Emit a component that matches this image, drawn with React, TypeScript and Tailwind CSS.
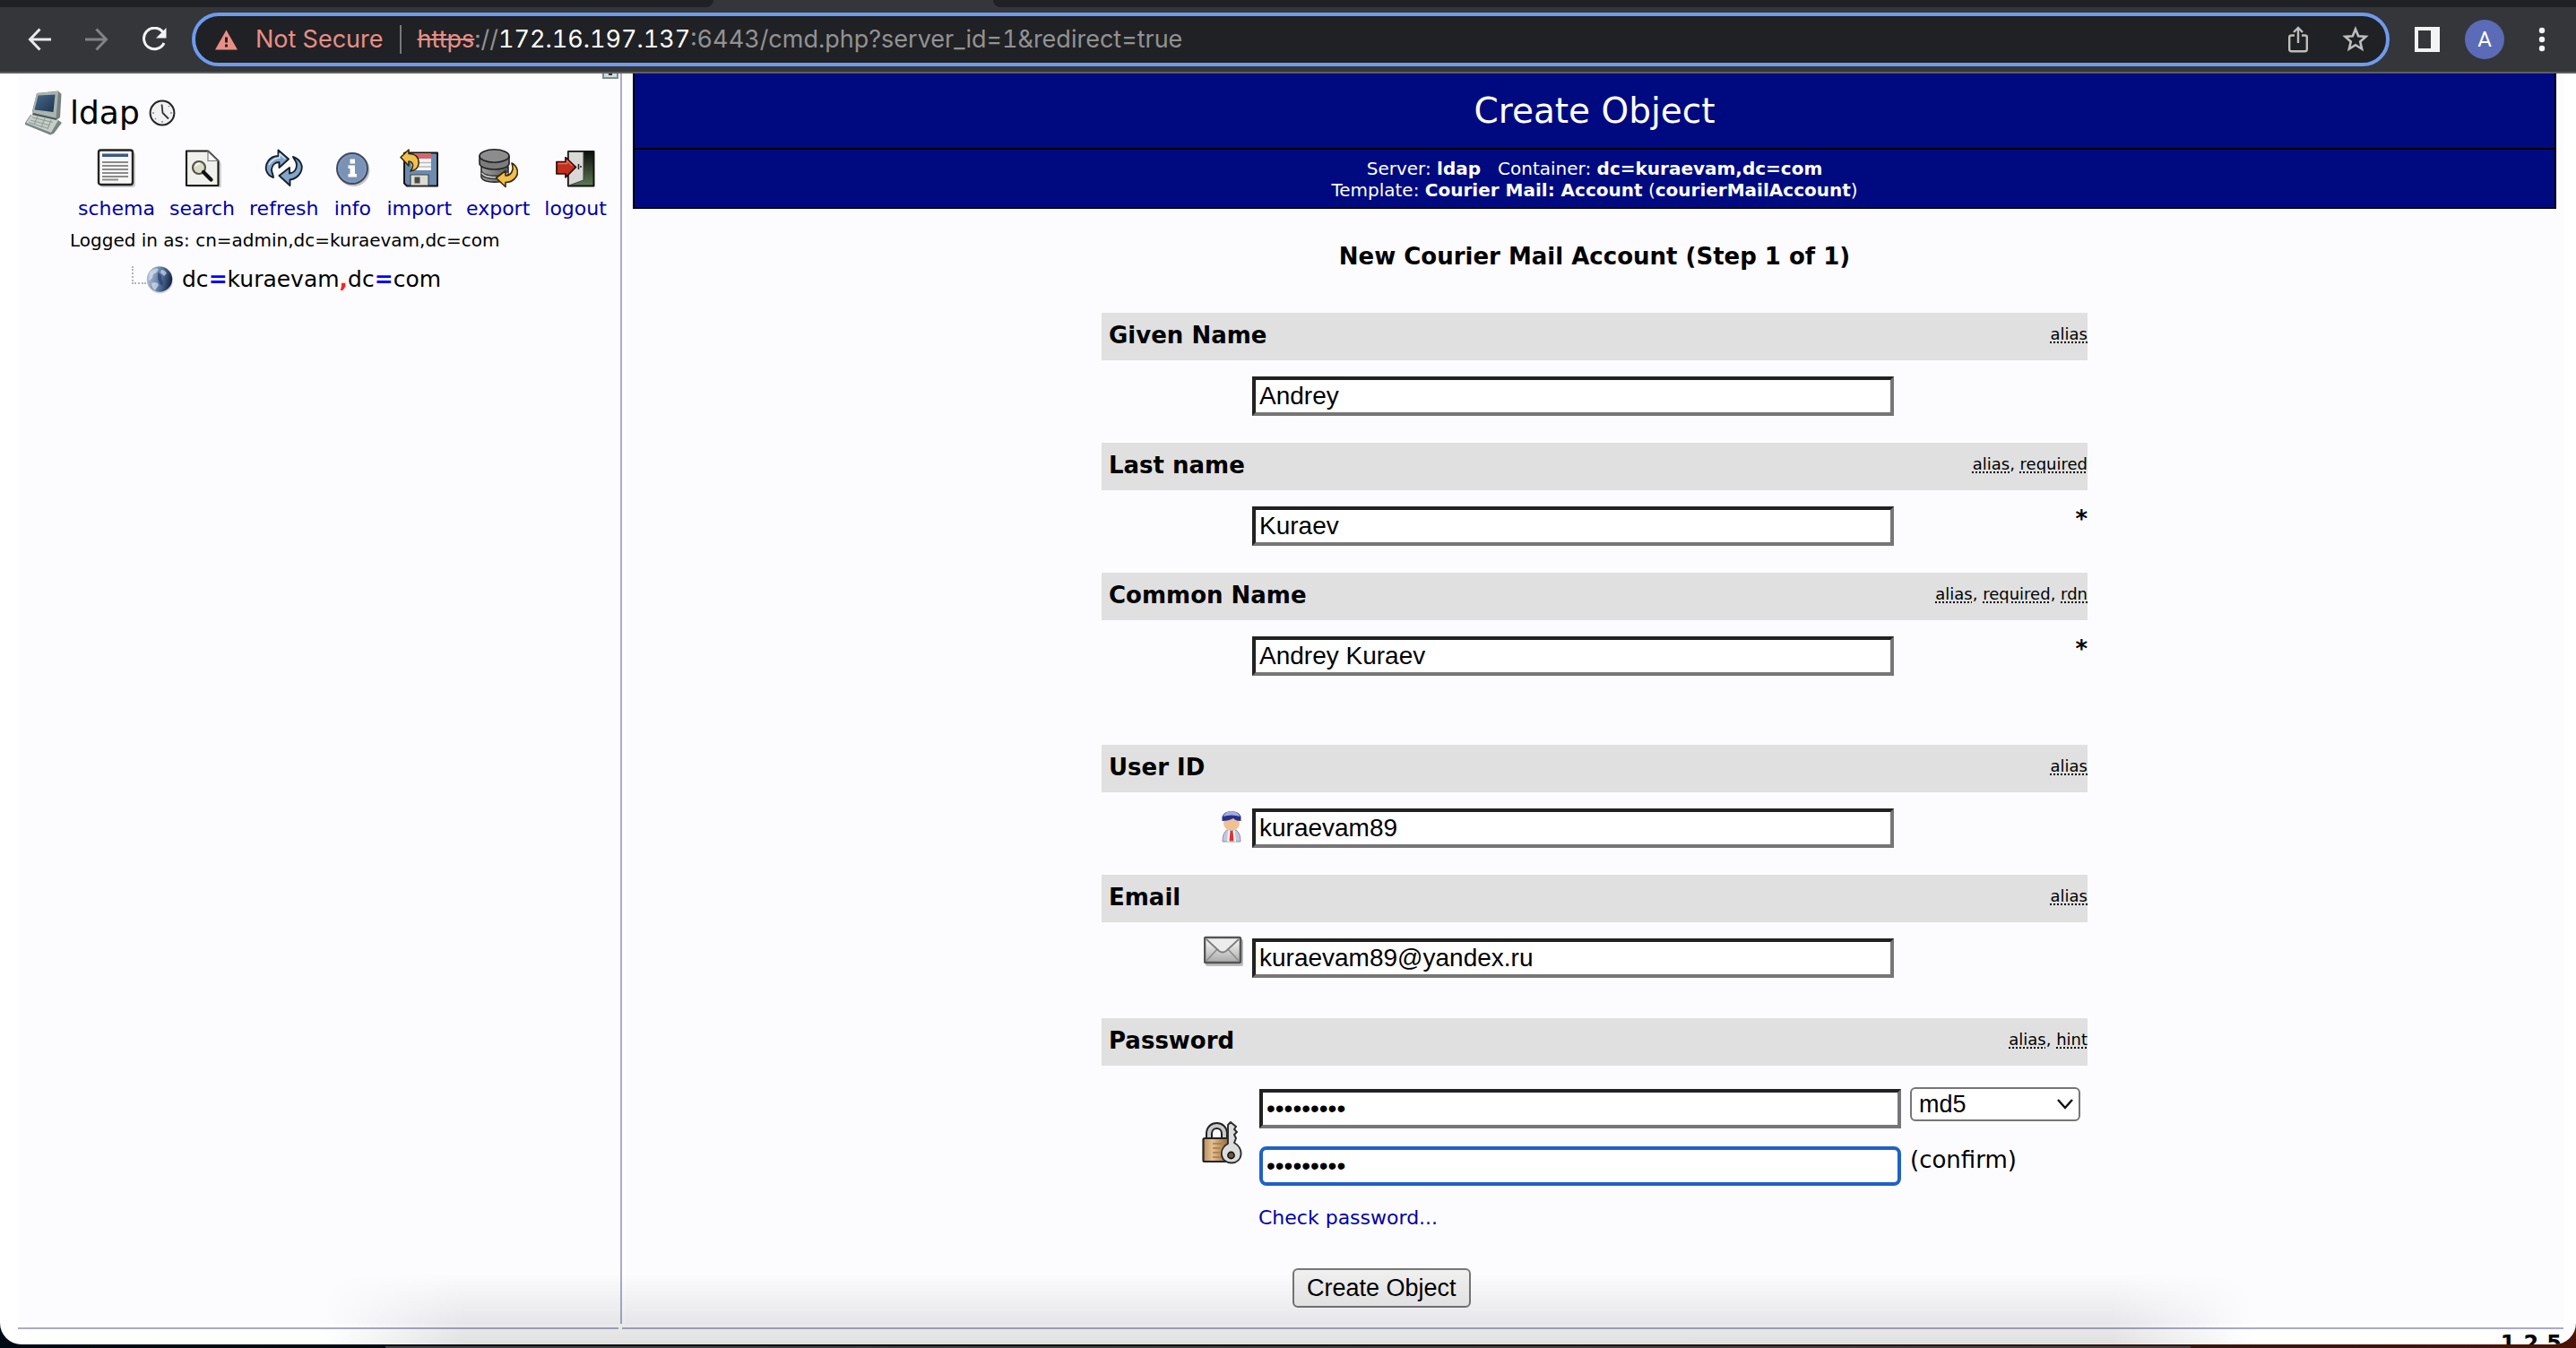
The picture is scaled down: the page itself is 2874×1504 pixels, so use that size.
import React from "react";

const verdana = "font-['DejaVu_Sans',Verdana,sans-serif]";
const arial = "font-['Liberation_Sans',Arial,sans-serif]";
const insetInput =
  "h-11 w-full border-4 border-t-[#212121] border-l-[#212121] border-r-[#767676] border-b-[#767676] bg-white px-1 text-[28px] leading-8 text-black outline-none font-['Liberation_Sans',Arial,sans-serif]";
const focusedInput =
  "h-11 w-full rounded-lg border-4 border-[#2060c8] bg-white px-1 text-[28px] leading-8 text-black outline-none font-['Liberation_Sans',Arial,sans-serif]";

/* ---------- Browser toolbar icons ---------- */

function BackIcon() {
  return (
    <svg width="26" height="26" viewBox="0 0 26 26" fill="none" stroke="#e8eaed" strokeWidth="3">
      <path d="M26 13H3M13.500 1.500L2.500 13L13.500 24.500" />
    </svg>
  );
}

function ForwardIcon() {
  return (
    <svg width="26" height="26" viewBox="0 0 26 26" fill="none" stroke="#818386" strokeWidth="3">
      <path d="M0 13H23M12.500 1.500L23.500 13L12.500 24.500" />
    </svg>
  );
}

function ReloadIcon() {
  return (
    <svg width="28" height="28" viewBox="0 0 28 28">
      <path d="M23.500 5.500A11.800 11.800 0 1 0 25 18" fill="none" stroke="#f1f3f4" strokeWidth="3" />
      <path d="M27.500 1V12.500H16z" fill="#f1f3f4" />
    </svg>
  );
}

function WarningIcon() {
  return (
    <svg width="25" height="23" viewBox="0 0 25 23">
      <path d="M12.500 0.500L25 22.500H0z" fill="#e88f86" />
      <path d="M11 8.500h3v6h-3zM11 16.500h3v3h-3z" fill="#202124" />
    </svg>
  );
}

function ShareIcon() {
  return (
    <svg width="22" height="30" viewBox="0 0 22 30" fill="none" stroke="#bdbdbd" strokeWidth="2.400">
      <path d="M7 10.500H3.500Q1.200 10.500 1.200 12.500V26Q1.200 28.200 3.500 28.200H18.500Q20.800 28.200 20.800 26V12.500Q20.800 10.500 18.500 10.500H15" />
      <path d="M11 19V2.500M6 7L11 2L16 7" />
    </svg>
  );
}

function StarIcon() {
  return (
    <svg width="30" height="30" viewBox="0 0 30 30" fill="none" stroke="#bdbdbd" strokeWidth="2.600">
      <path d="M15 3.500L18.200 11.200L26.500 11.900L20.200 17.400L22.100 25.500L15 21.200L7.900 25.500L9.800 17.400L3.500 11.900L11.800 11.200Z" />
    </svg>
  );
}

function SidePanelIcon() {
  return (
    <svg width="28" height="28" viewBox="0 0 28 28">
      <path d="M0 0H28V28H0zM4 4V24H18V4z" fill="#f1f3f4" fillRule="evenodd" />
    </svg>
  );
}

function DotsIcon() {
  return (
    <svg width="8" height="28" viewBox="0 0 8 28" fill="#f1f3f4">
      <circle cx="4" cy="4" r="3.200" />
      <circle cx="4" cy="14" r="3.200" />
      <circle cx="4" cy="24" r="3.200" />
    </svg>
  );
}

/* ---------- Sidebar icons ---------- */

function ComputerIcon() {
  return (
    <svg width="42" height="50" viewBox="0 0 42 50">
      <defs>
        <linearGradient id="screen" x1="0" y1="0" x2="1" y2="1">
          <stop offset="0" stopColor="#4a6a8a" />
          <stop offset="1" stopColor="#1c3450" />
        </linearGradient>
      </defs>
      <path d="M13 3L37 0.500L40.500 4L39 30L35 33L9 27L8 23z" fill="#77827f" />
      <path d="M13 3L37 1L34.500 31L8 25z" fill="#aab4b0" />
      <path d="M14.500 5.500L33.500 4.500L31.500 24L10.500 21.500z" fill="url(#screen)" />
      <path d="M6 27L37 33L41 36L32 48L28 49.500L0 38V36z" fill="#7a8582" />
      <path d="M7 27L37 33L29 47L1 36z" fill="#c6cec9" />
      <path d="M8 30L31 35.500M6 33L28 39M4 35.500L26 42.500M14 29L10 38M22 31L18 41M29 33L25 43" stroke="#929d98" strokeWidth="1.200" />
      <path d="M9 25L35 31V33L8 27z" fill="#4d5755" />
    </svg>
  );
}

function ClockIcon() {
  return (
    <svg width="30" height="30" viewBox="0 0 30 30">
      <circle cx="15" cy="15" r="13.400" fill="#f1f1f1" stroke="#222" strokeWidth="2" />
      <path d="M14.500 5.500L15.500 15L22 21.500" fill="none" stroke="#333" strokeWidth="1.800" />
      <path d="M15 24v2M4 15h2M24 15h2M7 22l1-1M23 7l-1 1" stroke="#888" strokeWidth="1.500" />
    </svg>
  );
}

function SchemaIcon() {
  return (
    <svg width="44" height="44" viewBox="0 0 44 44">
      <rect x="4" y="4" width="39" height="39" rx="3" fill="#00000030" />
      <rect x="2" y="1.500" width="38" height="38.500" rx="2.500" fill="#f7f7f7" stroke="#222" strokeWidth="2.400" />
      <path d="M6 5.500h29v3.500H6z" fill="#3b5988" />
      <path d="M6 15h29M6 19h29M6 23h29M6 27h29M6 31h29M6 34.500h18" stroke="#8b8b8b" strokeWidth="1.900" />
    </svg>
  );
}

function SearchIcon() {
  return (
    <svg width="44" height="44" viewBox="0 0 44 44">
      <path d="M6 5h26l11 11v27H6z" fill="#00000028" />
      <path d="M4 2.500H28L39.500 13.500V41H4z" fill="#f0f0ec" stroke="#1c1c1c" strokeWidth="2.200" strokeLinejoin="round" />
      <path d="M28 3V13.500H39z" fill="#fff" stroke="#777" strokeWidth="1.200" />
      <circle cx="18" cy="21" r="7" fill="#d9dcc6" stroke="#555549" strokeWidth="2.200" />
      <path d="M23 26L31.500 34.500" stroke="#111" strokeWidth="4.200" strokeLinecap="round" />
      <path d="M14 19q2-3 5-2.500" fill="none" stroke="#fff" strokeWidth="1.500" />
    </svg>
  );
}

function RefreshIcon() {
  return (
    <svg width="44" height="44" viewBox="0 0 44 44" strokeLinejoin="round">
      <g fill="#84a5c9" stroke="#15202c" strokeWidth="1.900">
        <path d="M10 32C1 29 0 20 4 14C7 9.500 11 8 15.500 8V1.500L27 11.500L16.500 21V15C12 15 8.500 18 8 23C8 27 10 29 10 32z" />
        <path d="M32 9C41 12 44 20 40 27C37 32 33 34 28.500 34.500V41L16.500 30L28 21V27.500C33 27 36 23 36 18C36 13 33 12 32 9z" />
      </g>
      <path d="M5 18Q9 10.500 17 10V5.500L23 11" fill="none" stroke="#d3e3f2" strokeWidth="1.500" />
    </svg>
  );
}

function InfoIcon() {
  return (
    <svg width="44" height="44" viewBox="0 0 44 44">
      <circle cx="23.500" cy="24" r="18" fill="#00000038" />
      <circle cx="22" cy="22" r="17" fill="#7a92b6" stroke="#3d4a60" strokeWidth="2" />
      <circle cx="22" cy="22" r="15" fill="none" stroke="#8499bc" strokeWidth="1.500" />
      <path d="M19.500 11.500h5.500v5h-5.500zM17.500 18.500H25V28h2v3.500H17.500V28h2v-6h-2z" fill="#fff" />
    </svg>
  );
}

function ImportIcon() {
  return (
    <svg width="44" height="44" viewBox="0 0 44 44" strokeLinejoin="round">
      <path d="M6 4.500H42V41.500H8L5 38.500V5z" fill="#6b8bb0" stroke="#151515" strokeWidth="2" />
      <path d="M13 5.500H35V24H13z" fill="#f6f6f6" />
      <path d="M13 5.500H35V11H13z" fill="#d2686a" />
      <path d="M13 15.500H35M13 20H35" stroke="#b9b9b9" strokeWidth="1.300" />
      <path d="M12 29H32V41H12z" fill="#dcdcd6" stroke="#444" strokeWidth="1.200" />
      <path d="M16.500 31.500H22.500V38.500H16.500z" fill="#4a4a46" />
      <path d="M1 9.500L10 1V5.500C18 5.500 22 10 21 17C20.500 21.500 17.500 24 12 25C15.500 21 16 14.500 10 14V19z" fill="#efc152" stroke="#382a08" strokeWidth="1.600" />
    </svg>
  );
}

function ExportIcon() {
  return (
    <svg width="44" height="44" viewBox="0 0 44 44" strokeLinejoin="round">
      <defs>
        <linearGradient id="disk" x1="0" y1="0" x2="1" y2="0">
          <stop offset="0" stopColor="#a2a2a2" />
          <stop offset="1" stopColor="#5b5b5b" />
        </linearGradient>
      </defs>
      <path d="M3 20V32C6 39 30 39 33 32V20z" fill="url(#disk)" stroke="#222" strokeWidth="1.500" />
      <path d="M3 25C8 32 28 32 33 25M3 29C8 35 28 35 33 29" fill="none" stroke="#3a3a3a" strokeWidth="1.300" />
      <path d="M3.500 27C9 33.500 27 33.500 32.500 27" fill="none" stroke="#cfcfcf" strokeWidth="1.200" />
      <path d="M1 8V17C4 25 31 25 34 17V8z" fill="#7c7c7c" stroke="#222" strokeWidth="1.600" />
      <ellipse cx="17.500" cy="8" rx="16.500" ry="7.200" fill="#8c8c8c" stroke="#222" strokeWidth="1.600" />
      <path d="M37 16C43 19 45 26 42 31C39.500 35 35 37.500 30 37.500V42.500L19.500 32.500L30 24.500V30C34 30 37 27 38 23C38.300 20 37.500 18 37 16z" fill="#f0bf4c" stroke="#382a08" strokeWidth="1.600" />
    </svg>
  );
}

function LogoutIcon() {
  return (
    <svg width="44" height="44" viewBox="0 0 44 44" strokeLinejoin="round">
      <defs>
        <linearGradient id="doorway" x1="0" y1="0" x2="0" y2="1">
          <stop offset="0" stopColor="#0c0f0b" />
          <stop offset="1" stopColor="#5d7a55" />
        </linearGradient>
      </defs>
      <path d="M14 3H42.500V41.500H14z" fill="url(#doorway)" stroke="#111" strokeWidth="2" />
      <path d="M14.500 3.500H31V35L14.500 41z" fill="#d8d8d4" stroke="#444" strokeWidth="1" />
      <path d="M25.500 17v6M28 19v2" stroke="#222" strokeWidth="1.500" />
      <path d="M1 14.500H11V9.500L22.500 20.500L11 32V28H1z" fill="#c1301d" stroke="#2c0a05" strokeWidth="1.700" />
      <path d="M2.500 16.500H12.500V13L18.500 19" fill="none" stroke="#e2705c" strokeWidth="1.400" />
    </svg>
  );
}

function GlobeIcon() {
  return (
    <svg width="30" height="32" viewBox="0 0 30 32">
      <defs>
        <linearGradient id="globe" x1="0" y1="0.400" x2="1" y2="0.600">
          <stop offset="0" stopColor="#b4c2d4" />
          <stop offset="0.500" stopColor="#5f7da6" />
          <stop offset="1" stopColor="#101f40" />
        </linearGradient>
      </defs>
      <circle cx="15.500" cy="17" r="14.500" fill="#00000025" />
      <circle cx="15" cy="15.500" r="14.200" fill="url(#globe)" />
      <path d="M4 8Q10 2 14 4Q12 9 8 10Q7 16 3 17zM17 5Q21 5 23 9L20 12L16 8zM6 20Q12 17 14 22L10 28Q6 25 6 20z" fill="#e8f0f8" opacity="0.600" />
      <path d="M13 8Q18 10 17 15Q20 18 18 23Q14 20 13 15z" fill="#223c6e" opacity="0.700" />
    </svg>
  );
}

/* ---------- Form icons ---------- */

function UserIcon() {
  return (
    <svg width="26" height="42" viewBox="0 0 26 42">
      <path d="M3 41Q3 31 8 28H18Q23 31 23 41z" fill="#c3c7de" stroke="#8b8fa8" strokeWidth="1" />
      <path d="M9.500 27L13 31L16.500 27L18 41H8z" fill="#f3f3fa" />
      <path d="M11.500 29h3l1 11.500h-5z" fill="#d8372f" />
      <ellipse cx="13" cy="20.500" rx="9" ry="8" fill="#f0c193" />
      <path d="M2.500 18V13Q5 7 13 7Q21 7 23.500 13V18Q17 18 15 15Q10 18 2.500 18z" fill="#26308e" />
      <path d="M3.500 13Q6 7 13 7Q20 7 22.500 13Q13 10 3.500 13z" fill="#a3aed8" />
    </svg>
  );
}

function MailIcon() {
  return (
    <svg width="44" height="36" viewBox="0 -2 44 36">
      <defs>
        <linearGradient id="paper" x1="0" y1="0" x2="0" y2="1">
          <stop offset="0" stopColor="#ffffff" />
          <stop offset="1" stopColor="#a8a8a8" />
        </linearGradient>
      </defs>
      <rect x="2" y="3" width="42" height="30" rx="2" fill="#00000040" />
      <rect x="1" y="1" width="40" height="28" rx="1.500" fill="url(#paper)" stroke="#555" strokeWidth="2.600" />
      <path d="M3 27L15 14M39 27L27 14" stroke="#8c8c8c" strokeWidth="1.600" />
      <path d="M3 3L17 16Q21 19 25 16L39 3" fill="#ececec" stroke="#7d7d7d" strokeWidth="1.800" />
    </svg>
  );
}

function LockIcon() {
  return (
    <svg width="46" height="48" viewBox="0 0 46 48" strokeLinejoin="round">
      <defs>
        <linearGradient id="brass" x1="0" y1="0" x2="1" y2="0">
          <stop offset="0" stopColor="#b98d5c" />
          <stop offset="0.350" stopColor="#e6c092" />
          <stop offset="1" stopColor="#8f6232" />
        </linearGradient>
      </defs>
      <path d="M5 20V14C5 -2 28 -2 28 14V20H22V14C22 6 11 6 11 14V20z" fill="#c9c9c9" stroke="#222" strokeWidth="2" />
      <rect x="1.500" y="19" width="29" height="26" rx="1.500" fill="url(#brass)" stroke="#222" strokeWidth="2.200" />
      <path d="M12 25h10M12 30h8M12 35h8M12 40h10" stroke="#a87a45" strokeWidth="1.400" />
      <path d="M29 4L32 1L38 6L36 9L39 12L36 15L38 19L36 24C47 30 46 46 33 46.500C20 46 18 31 29 25z" fill="#dcdcdc" stroke="#2a2a2a" strokeWidth="1.900" />
      <circle cx="32.500" cy="38" r="3.600" fill="#6b5a42" stroke="#111" strokeWidth="1.600" />
    </svg>
  );
}

/* ---------- Browser toolbar ---------- */

function BrowserBar() {
  return (
    <header className="shrink-0 bg-[#35363a]">
      <div className="flex h-2 justify-between">
        <div className="w-[796px] rounded-br-lg bg-[#202124]" />
        <div className="ml-[312px] flex-1 rounded-bl-lg bg-[#202124]" />
      </div>
      <div className="flex h-[74px] items-center border-b-2 border-[#5e5e62] pr-[34px] pl-[31px]">
        <button aria-label="Back"><BackIcon /></button>
        <button aria-label="Forward" className="ml-[38px]"><ForwardIcon /></button>
        <button aria-label="Reload" className="ml-[37px]"><ReloadIcon /></button>
        <div className="ml-7 flex h-[60px] flex-1 items-center rounded-full border-4 border-[#6e9bee] bg-[#202124] pr-[19px] pl-[22px] font-[Inter,sans-serif] text-[27px] whitespace-pre tabular-nums">
          <WarningIcon />
          <span className="ml-5 text-[#e88f86]">Not Secure</span>
          <span className="mx-[18px] h-8 w-[2px] bg-[#77787b]" />
          <span className="flex-1 text-[#919294]">
            <span className="text-[#e88f86] line-through">https</span>://<span className="text-white">172.16.197.137</span>:6443/cmd.php?server_id=1&amp;redirect=true
          </span>
          <button aria-label="Share"><ShareIcon /></button>
          <button aria-label="Bookmark" className="ml-[38px]"><StarIcon /></button>
        </div>
        <button aria-label="Side panel" className="ml-7"><SidePanelIcon /></button>
        <button className="ml-7 h-11 w-11 rounded-full bg-[#5c6bb8] font-[Roboto,sans-serif] text-2xl text-white">A</button>
        <button aria-label="Menu" className="ml-[38px]"><DotsIcon /></button>
      </div>
    </header>
  );
}

/* ---------- Sidebar ---------- */

const actions = [
  { label: "schema", icon: <SchemaIcon /> },
  { label: "search", icon: <SearchIcon /> },
  { label: "refresh", icon: <RefreshIcon /> },
  { label: "info", icon: <InfoIcon /> },
  { label: "import", icon: <ImportIcon /> },
  { label: "export", icon: <ExportIcon /> },
  { label: "logout", icon: <LogoutIcon /> },
];

function Sidebar() {
  return (
    <aside className="relative w-[674px] shrink-0 border-r-2 border-[#aaaacc] bg-[#fcfcfe]">
      <button aria-label="Collapse" className="absolute top-0 right-[2px] flex h-1.5 w-[18px] justify-center border-2 border-t-0 border-[#7e8c90] bg-[#cfdcde]">
        <span className="h-0.5 w-1 bg-[#333]" />
      </button>
      <div className="flex h-[84px] items-center pt-1 pl-2">
        <ComputerIcon />
        <span className="ml-2 text-4xl">ldap</span>
        <span className="ml-2.5"><ClockIcon /></span>
      </div>
      <nav className="flex gap-4 pl-[67px]">
        {actions.map((a) => (
          <a key={a.label} href="#" className="flex flex-col items-center text-[22px] leading-[26px] text-[#0000aa]">
            {a.icon}
            <span className="mt-2.5">{a.label}</span>
          </a>
        ))}
      </nav>
      <div className="mt-2 pl-[58px] text-xl leading-7">Logged in as: cn=admin,dc=kuraevam,dc=com</div>
      <div className="mt-2.5 flex items-center pl-[127px]">
        <span className="mb-2.5 h-5 w-4 border-b-2 border-l-2 border-dotted border-[#b5b5b5]" />
        <GlobeIcon />
        <a href="#" className="ml-2.5 text-[25px] leading-10">
          dc<b className="text-[#0000ff]">=</b>kuraevam<b className="text-[#ff2020]">,</b>dc<b className="text-[#0000ff]">=</b>com
        </a>
      </div>
    </aside>
  );
}

/* ---------- Form ---------- */

function FieldHeader({ id, label, hints }: { id: string; label: string; hints: string[] }) {
  return (
    <div className="flex h-[53px] items-start justify-between bg-[#e0e0e0] pt-2.5 pl-2">
      <label htmlFor={id} className="text-[26px] leading-[30px] font-bold">{label}</label>
      <span className="mt-1 text-lg leading-5">
        {hints.map((h, i) => (
          <React.Fragment key={h}>
            {i > 0 && ", "}
            <abbr className="underline decoration-dotted decoration-2 underline-offset-2">{h}</abbr>
          </React.Fragment>
        ))}
      </span>
    </div>
  );
}

type FieldProps = {
  id: string;
  label: string;
  hints: string[];
  value: string;
  icon?: React.ReactNode;
  required?: boolean;
};

function Field({ id, label, hints, value, icon, required }: FieldProps) {
  return (
    <section>
      <FieldHeader id={id} label={label} hints={hints} />
      <div className="mt-[18px] grid grid-cols-[158px_716px_1fr] gap-x-2.5">
        <div className="-mt-1 flex items-start justify-end">{icon}</div>
        <input id={id} type="text" defaultValue={value} className={insetInput} />
        <div className="text-right text-[26px] leading-7 font-bold">{required && "*"}</div>
      </div>
    </section>
  );
}

function PasswordField() {
  return (
    <section>
      <FieldHeader id="password" label="Password" hints={["alias", "hint"]} />
      <div className="mt-6 grid grid-cols-[158px_716px_1fr] gap-x-2.5">
        <div className="flex items-end justify-end pb-6"><LockIcon /></div>
        <div className="ml-2 -mr-2 flex flex-col gap-5 pt-0.5">
          <input id="password" type="password" defaultValue="password1" className={insetInput} />
          <input aria-label="Confirm password" type="password" defaultValue="password1" className={focusedInput} />
        </div>
        <div className="ml-2 flex flex-col gap-[26px]">
          <div className="relative w-[190px]">
            <select aria-label="Hash" className={`h-[38px] w-full appearance-none rounded-md border-2 border-[#767676] bg-white px-2 text-[27px] leading-8 ${arial}`}>
              <option>md5</option>
            </select>
            <svg className="pointer-events-none absolute top-3 right-2" width="18" height="14" viewBox="0 0 18 14" fill="none" stroke="#111" strokeWidth="2.400">
              <path d="M1 2L9 11L17 2" />
            </svg>
          </div>
          <span className="text-[26px] leading-[34px]">(confirm)</span>
        </div>
      </div>
      <a href="#" className="mt-[22px] ml-[175px] inline-block text-[22px] leading-7 text-[#0000aa]">Check password...</a>
    </section>
  );
}

function CreateForm() {
  return (
    <form className="mx-auto flex w-full max-w-[1100px] flex-col gap-[30px] pt-[46px]" onSubmit={(e) => e.preventDefault()}>
      <Field id="given" label="Given Name" hints={["alias"]} value="Andrey" />
      <Field id="last" label="Last name" hints={["alias", "required"]} value="Kuraev" required />
      <Field id="common" label="Common Name" hints={["alias", "required", "rdn"]} value="Andrey Kuraev" required />
      <div className="mt-[47px]">
        <Field id="uid" label="User ID" hints={["alias"]} value="kuraevam89" icon={<UserIcon />} />
      </div>
      <Field id="email" label="Email" hints={["alias"]} value="kuraevam89@yandex.ru" icon={<MailIcon />} />
      <div className="mt-[15px]">
        <PasswordField />
      </div>
      <button type="submit" className={`mt-3 ml-[213px] h-11 self-start rounded-md border-2 border-[#767676] bg-[#efefef] px-3.5 text-[27px] leading-8 ${arial}`}>
        Create Object
      </button>
    </form>
  );
}

function Main() {
  return (
    <main className="ml-1 flex-1 bg-[#fcfcfe] px-2">
      <div className="border-2 border-t-0 border-black bg-[#000a80] text-center text-white">
        <h1 className="h-[85px] border-b-2 border-black pt-[18px] text-[39px] leading-[48px]">Create Object</h1>
        <div className="px-2 pt-[9px] pb-[7px] text-xl leading-6">
          <p>
            Server: <b>ldap</b>&nbsp;&nbsp; Container: <b>dc=kuraevam,dc=com</b>
          </p>
          <p>
            Template: <b>Courier Mail: Account</b> (<b>courierMailAccount</b>)
          </p>
        </div>
      </div>
      <h2 className="mt-9 text-center text-[26px] leading-[34px] font-bold">New Courier Mail Account (Step 1 of 1)</h2>
      <CreateForm />
    </main>
  );
}

export default function App() {
  return (
    <div className={`flex h-screen flex-col overflow-hidden bg-linear-to-r from-[#000a14] via-[#111] to-[#4a1408] text-black ${verdana}`}>
      <BrowserBar />
      <div className="relative flex min-h-0 flex-1 flex-col overflow-hidden rounded-b-3xl bg-white">
        <div className="mr-3.5 ml-5 flex min-h-0 flex-1">
          <Sidebar />
          <Main />
        </div>
        <div className="mt-1 mr-3.5 ml-5 flex gap-1">
          <div className="h-0.5 w-[670px] bg-[#aaaacc]" />
          <div className="h-0.5 flex-1 bg-[#aaaacc]" />
        </div>
        <footer className="h-[17px] overflow-hidden pt-1 pr-4 text-right text-2xl leading-6 font-bold">1.2.5</footer>
        <div className="pointer-events-none absolute inset-x-[360px] bottom-0 h-20 bg-linear-to-b from-black/0 to-black/12 [mask-image:linear-gradient(to_right,transparent,black_160px,black_calc(100%-160px),transparent)]" />
      </div>
      <div className="mx-[430px] mt-0.5 h-0.5 bg-[#444]" />
    </div>
  );
}
